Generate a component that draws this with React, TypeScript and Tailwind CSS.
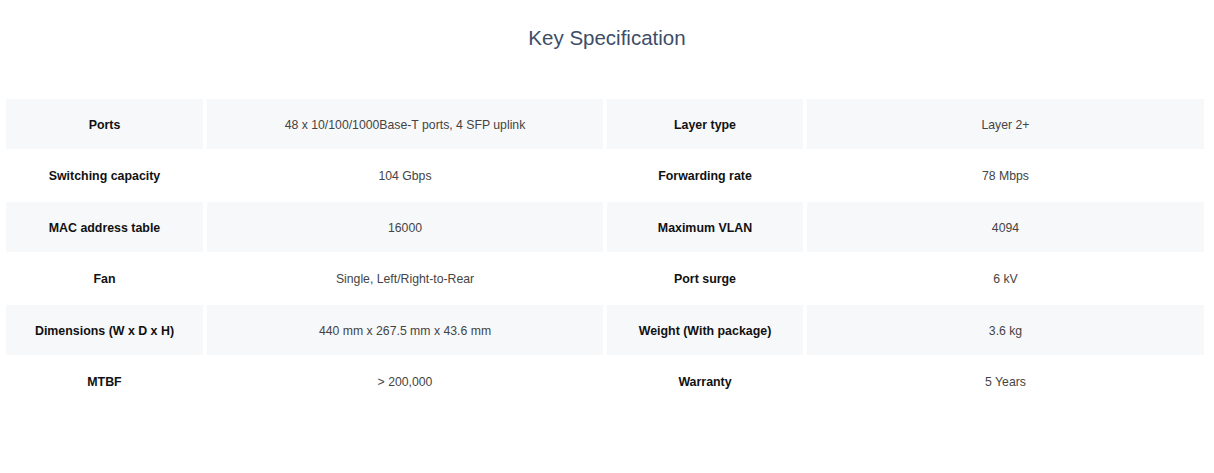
import React from "react";

const rows: [string, string, string, string][] = [
  ["Ports", "48 x 10/100/1000Base-T ports, 4 SFP uplink", "Layer type", "Layer 2+"],
  ["Switching capacity", "104 Gbps", "Forwarding rate", "78 Mbps"],
  ["MAC address table", "16000", "Maximum VLAN", "4094"],
  ["Fan", "Single, Left/Right-to-Rear", "Port surge", "6 kV"],
  ["Dimensions (W x D x H)", "440 mm x 267.5 mm x 43.6 mm", "Weight (With package)", "3.6 kg"],
  ["MTBF", "> 200,000", "Warranty", "5 Years"],
];

export default function App() {
  return (
    <div
      className="w-[1214px] h-[473px] bg-white overflow-hidden"
      style={{ fontFamily: '"Liberation Sans", Arial, sans-serif' }}
    >
      <div className="pt-[25px] h-[99px]">
        <h2 className="text-center text-[20.5px] leading-[26px] text-[#3d4d68] font-normal">
          Key Specification
        </h2>
      </div>
      <div className="ml-[6px] grid grid-cols-[197px_396px_196px_397px] gap-x-[4px] gap-y-[2px]">
        {rows.map((r, i) => {
          const bg = i % 2 === 0 ? "bg-[#f7f8fa]" : "bg-white";
          return (
            <React.Fragment key={i}>
              <div className={`${bg} h-[49.5px] pt-[2px] flex items-center justify-center text-[12.4px] leading-[16px] font-bold text-[#111]`}>
                {r[0]}
              </div>
              <div className={`${bg} h-[49.5px] pt-[2px] flex items-center justify-center text-[12.25px] leading-[16px] text-[#444]`}>
                {r[1]}
              </div>
              <div className={`${bg} h-[49.5px] pt-[2px] flex items-center justify-center text-[12.4px] leading-[16px] font-bold text-[#111]`}>
                {r[2]}
              </div>
              <div className={`${bg} h-[49.5px] pt-[2px] flex items-center justify-center text-[12.25px] leading-[16px] text-[#444]`}>
                {r[3]}
              </div>
            </React.Fragment>
          );
        })}
      </div>
    </div>
  );
}
